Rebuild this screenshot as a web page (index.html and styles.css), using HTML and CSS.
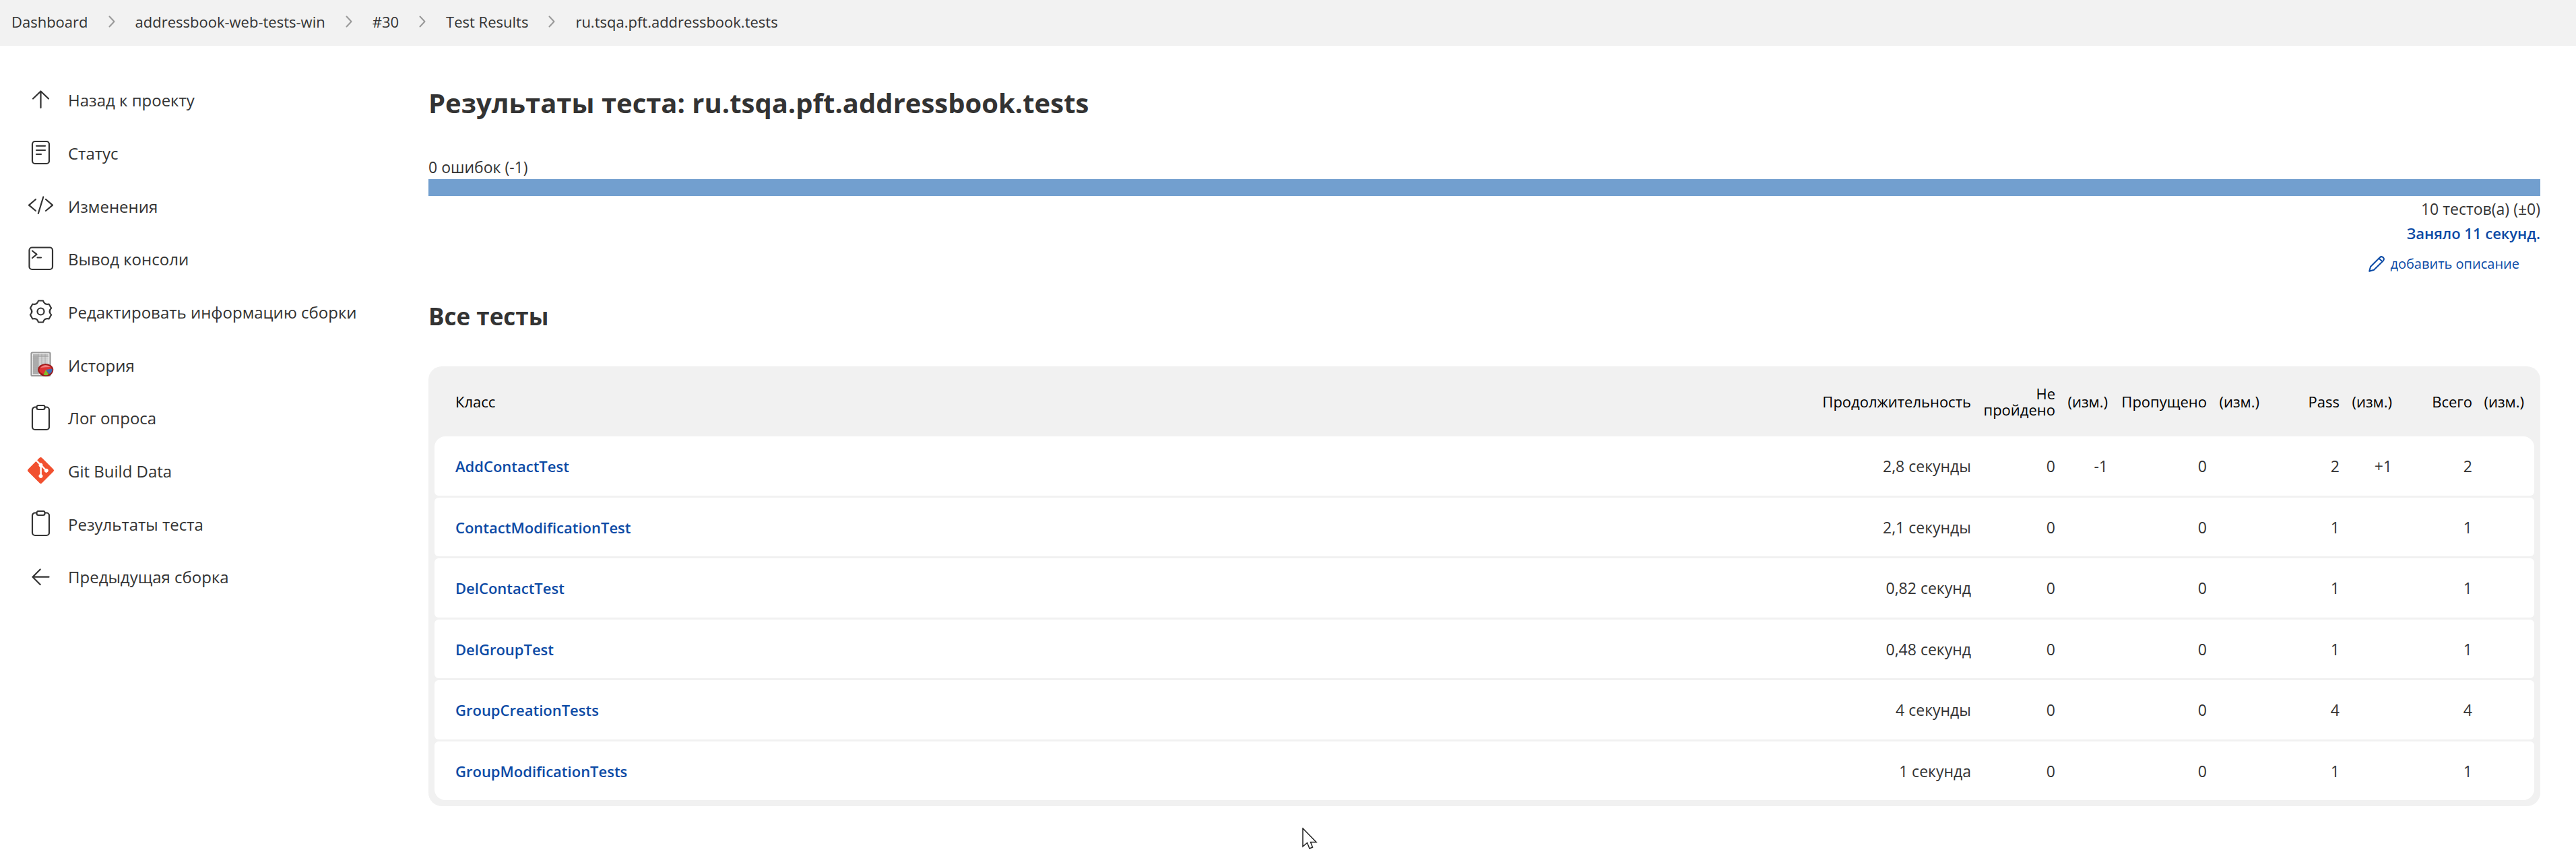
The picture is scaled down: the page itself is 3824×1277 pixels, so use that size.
FILE: index.html
```html
<!DOCTYPE html>
<html lang="ru">
<head>
<meta charset="utf-8">
<meta name="viewport" content="width=device-width, initial-scale=1">
<title>Результаты теста: ru.tsqa.pft.addressbook.tests</title>
<link rel="stylesheet" href="styles.css">
</head>
<body>
<svg class="defs" aria-hidden="true">
  <symbol id="chevron" viewBox="0 0 10 18"><path d="M1.500 1.500L8.500 9L1.500 16.500"/></symbol>
  <symbol id="clipboard" viewBox="0 0 40 40"><path d="M14 3.500H12a4 4 0 0 0-4 4V33a4 4 0 0 0 4 4H29a4 4 0 0 0 4-4V7.500a4 4 0 0 0-4-4H27"/><rect x="14.500" y="1" width="12" height="6" rx="2.500"/></symbol>
</svg>

<nav class="breadcrumbs" aria-label="Breadcrumbs">
  <a href="#">Dashboard</a>
  <svg class="chevron"><use href="#chevron"/></svg>
  <a href="#">addressbook-web-tests-win</a>
  <svg class="chevron"><use href="#chevron"/></svg>
  <a href="#">#30</a>
  <svg class="chevron"><use href="#chevron"/></svg>
  <a href="#">Test Results</a>
  <svg class="chevron"><use href="#chevron"/></svg>
  <a href="#">ru.tsqa.pft.addressbook.tests</a>
</nav>

<div class="page">
  <aside class="sidebar">
    <ul class="tasks">
      <li><a class="task" href="#"><svg class="icon" viewBox="0 0 40 40"><path d="M20.500 31V7M9 17.500L20.500 6.500L32 17.500"/></svg>Назад к проекту</a></li>
      <li><a class="task" href="#"><svg class="icon" viewBox="0 0 40 40"><rect x="8" y="2" width="25" height="33" rx="4"/><path d="M14 8.700H27M14 15H27M14 21H21"/></svg>Статус</a></li>
      <li><a class="task" href="#"><svg class="icon" viewBox="0 0 40 40"><path d="M13 10L3 18.700L13 27M28 10L38 18.700L28 27M24.300 6.500L16.800 31"/></svg>Изменения</a></li>
      <li><a class="task" href="#"><svg class="icon" viewBox="0 0 40 40"><rect x="3.500" y="2.500" width="34.500" height="32.500" rx="4"/><path d="M8 7.500L14.500 12.700L8 18M15.500 17.500H21"/></svg>Вывод консоли</a></li>
      <li><a class="task" href="#"><svg class="icon" viewBox="0 0 40 40"><g transform="translate(20.500 18.500)"><circle r="5"/><path d="M-3.500-16H3.500Q5.400-9.400 12.100-11L15.600-5Q10.800 0 15.600 5L12.100 11Q5.400 9.400 3.500 16H-3.500Q-5.400 9.400-12.100 11L-15.600 5Q-10.800 0-15.600-5L-12.100-11Q-5.400-9.400-3.500-16Z"/></g></svg>Редактировать информацию сборки</a></li>
      <li><a class="task" href="#"><svg class="icon icon-filled" viewBox="0 0 40 40">
        <rect x="6.500" y="1.500" width="28" height="34.500" rx="1.500" fill="#f4f4f4" stroke="#999"/>
        <rect x="9" y="4" width="23" height="30" fill="#e6e6e6"/>
        <path d="M9 4H32V8H9Z" fill="#bdbdbd"/><path d="M9 4H17V34H9Z" fill="#b2b2b2"/>
        <path d="M9 8H32M9 11H32M9 14H32M9 17H32M9 20H32M9 23H32M9 26H32M9 29H32M9 32H32M17 4V34M22 4V34M27 4V34" fill="none" stroke="#9a9a9a" stroke-width="0.700"/>
        <ellipse cx="28" cy="29" rx="10.500" ry="8" fill="#7d1c1c"/>
        <ellipse cx="27.700" cy="27" rx="10.500" ry="8" fill="#dd3434" stroke="#a01c1c"/>
        <path d="M20 24Q27 17 35 23Q28 23 20 24Z" fill="#f08080"/>
        <path d="M28 27L37.500 25.500Q38.500 31 33 33.500Z" fill="#3f6fb5"/>
        <path d="M28 27L32 34.500Q28 36 24.500 34.500Z" fill="#7cc32c"/>
      </svg>История</a></li>
      <li><a class="task" href="#"><svg class="icon"><use href="#clipboard"/></svg>Лог опроса</a></li>
      <li><a class="task" href="#"><svg class="icon icon-filled" viewBox="0 0 40 40"><path transform="translate(1 -1) scale(.424)" fill="#f1502f" d="M90.156 41.965 50.036 1.848a5.918 5.918 0 0 0-8.372 0l-8.328 8.332 10.566 10.566a7.030 7.030 0 0 1 7.230 1.684 7.034 7.034 0 0 1 1.669 7.277l10.187 10.184a7.028 7.028 0 0 1 7.278 1.672 7.040 7.040 0 0 1 0 9.957 7.050 7.050 0 0 1-9.965 0 7.044 7.044 0 0 1-1.528-7.660l-9.500-9.497V59.360a7.040 7.040 0 0 1 1.860 11.290 7.040 7.040 0 0 1-9.957 0 7.040 7.040 0 0 1 0-9.958 7.060 7.060 0 0 1 2.304-1.539V33.926a7.049 7.049 0 0 1-3.820-9.234L29.242 14.272 1.730 41.777a5.918 5.918 0 0 0 0 8.371L41.852 90.270a5.925 5.925 0 0 0 8.370 0l39.934-39.934a5.925 5.925 0 0 0 0-8.371"/></svg>Git Build Data</a></li>
      <li><a class="task" href="#"><svg class="icon"><use href="#clipboard"/></svg>Результаты теста</a></li>
      <li><a class="task" href="#"><svg class="icon" viewBox="0 0 40 40"><path d="M32.500 19.700H8.500M19.700 8.500L8.500 19.700L19.700 31"/></svg>Предыдущая сборка</a></li>
    </ul>
  </aside>

  <main class="content">
    <h1>Результаты теста: ru.tsqa.pft.addressbook.tests</h1>

    <section class="summary">
      <div class="failures">0 ошибок (-1)</div>
      <div class="result-bar"></div>
      <div class="total">10 тестов(а) (±0)</div>
      <a class="duration" href="#">Заняло 11 секунд.</a>
      <a class="describe" href="#"><svg class="pencil" viewBox="0 0 24 24"><path d="M1.200 22.800L3 16L16.800 2.200Q19.300 0 21.700 2.300Q24 4.700 21.800 7.200L8 20.800ZM15.500 3.500L20.500 8.500"/></svg>добавить описание</a>
    </section>

    <h2>Все тесты</h2>

    <table class="results">
      <colgroup>
        <col><col class="col-duration"><col class="col-failed"><col class="col-diff"><col class="col-skipped"><col class="col-diff"><col class="col-count"><col class="col-diff"><col class="col-count"><col class="col-last">
      </colgroup>
      <thead>
        <tr><th>Класс</th><th>Продолжительность</th><th>Не пройдено</th><th>(изм.)</th><th>Пропущено</th><th>(изм.)</th><th>Pass</th><th>(изм.)</th><th>Всего</th><th>(изм.)</th></tr>
      </thead>
      <tbody>
        <tr><td><a href="#">AddContactTest</a></td><td>2,8 секунды</td><td>0</td><td>-1</td><td>0</td><td></td><td>2</td><td>+1</td><td>2</td><td></td></tr>
        <tr><td><a href="#">ContactModificationTest</a></td><td>2,1 секунды</td><td>0</td><td></td><td>0</td><td></td><td>1</td><td></td><td>1</td><td></td></tr>
        <tr><td><a href="#">DelContactTest</a></td><td>0,82 секунд</td><td>0</td><td></td><td>0</td><td></td><td>1</td><td></td><td>1</td><td></td></tr>
        <tr><td><a href="#">DelGroupTest</a></td><td>0,48 секунд</td><td>0</td><td></td><td>0</td><td></td><td>1</td><td></td><td>1</td><td></td></tr>
        <tr><td><a href="#">GroupCreationTests</a></td><td>4 секунды</td><td>0</td><td></td><td>0</td><td></td><td>4</td><td></td><td>4</td><td></td></tr>
        <tr><td><a href="#">GroupModificationTests</a></td><td>1 секунда</td><td>0</td><td></td><td>0</td><td></td><td>1</td><td></td><td>1</td><td></td></tr>
      </tbody>
    </table>
  </main>
</div>

<svg class="pointer" viewBox="0 0 24 34" aria-hidden="true"><path d="M1 1V28L7.500 22.500L11 31L15.500 29L12.500 21.500H21Z"/></svg>
</body>
</html>
```

FILE: styles.css
```css
* {
  box-sizing: border-box;
}

body {
  margin: 0;
  min-height: 100vh;
  position: relative;
  background: #fff;
  color: #333;
  font-family: "Open Sans", "Noto Sans", sans-serif;
  font-size: 23px;
  font-weight: 500;
}

a {
  color: #0b4aa5;
  text-decoration: none;
}

.defs {
  display: none;
}

/* Breadcrumb bar */
.breadcrumbs {
  display: flex;
  align-items: center;
  gap: 30px;
  height: 68px;
  padding: 0 17px 5px;
  background: #f2f2f2;
  font-size: 22px;
}

.breadcrumbs a {
  color: #333;
}

.chevron {
  width: 10px;
  height: 18px;
  fill: none;
  stroke: #999;
  stroke-width: 2;
  stroke-linecap: round;
  stroke-linejoin: round;
}

.page {
  display: flex;
  align-items: flex-start;
}

/* Side panel */
.sidebar {
  flex: 0 0 636px;
  padding: 41px 0 0 40px;
}

.tasks {
  margin: 0;
  padding: 0;
  list-style: none;
}

.task {
  display: flex;
  align-items: center;
  gap: 21px;
  height: 79px;
  color: #333;
  font-size: 24px;
}

.tasks li:nth-child(3n) .task {
  height: 78px;
}

.icon {
  width: 40px;
  height: 40px;
  overflow: visible;
  fill: none;
  stroke: #333;
  stroke-width: 2.2;
  stroke-linecap: round;
  stroke-linejoin: round;
}

.icon-filled {
  stroke: none;
}

/* Main column */
.content {
  flex: 1;
  min-width: 0;
  padding: 61px 53px 80px 0;
}

h1 {
  margin: 0 0 55px;
  font-size: 40px;
  line-height: 48px;
  font-weight: 700;
}

h2 {
  margin: 36px 0 52px;
  font-size: 35px;
  line-height: 44px;
  font-weight: 700;
}

.summary {
  display: flex;
  flex-direction: column;
  align-items: flex-end;
  line-height: 36px;
}

.failures {
  align-self: stretch;
  line-height: 32px;
  font-weight: 400;
}

.result-bar {
  align-self: stretch;
  height: 25px;
  margin: 2px 0 1px;
  background: #729fcf;
}

.total {
  font-weight: 400;
}

.duration {
  font-size: 22px;
  font-weight: 600;
}

.describe {
  display: flex;
  align-items: center;
  gap: 8px;
  height: 40px;
  margin-top: 8px;
  padding-right: 31px;
  font-size: 20px;
}

.pencil {
  width: 24px;
  height: 24px;
  fill: none;
  stroke: #0b4aa5;
  stroke-width: 2;
  stroke-linejoin: round;
}

/* Results table */
.results {
  width: 100%;
  table-layout: fixed;
  border-collapse: separate;
  border-spacing: 0 3px;
  padding: 0 9px 6px;
  border-radius: 20px;
  background: #f1f1f1;
  text-align: right;
}

.col-duration {
  width: 241px;
}

.col-failed {
  width: 125px;
}

.col-diff {
  width: 78px;
}

.col-skipped {
  width: 147px;
}

.col-count {
  width: 119px;
}

.col-last {
  width: 85px;
}

.results th {
  height: 98px;
  padding: 0 7px 0 4px;
  color: #000;
  font-size: 22px;
  line-height: 24px;
  font-weight: 500;
}

.results td {
  height: 88px;
  padding: 0 7px;
  background: #fff;
}

.results td a {
  font-size: 22px;
  font-weight: 600;
}

.results tr:nth-child(even) td {
  height: 87px;
}

.results th:first-child,
.results td:first-child {
  padding-left: 31px;
  text-align: left;
}

.results th:last-child {
  padding-right: 15px;
}

.results td:first-child {
  border-radius: 6px 0 0 6px;
}

.results td:last-child {
  border-radius: 0 6px 6px 0;
}

.results tbody tr:first-child td:first-child {
  border-top-left-radius: 16px;
}

.results tbody tr:first-child td:last-child {
  border-top-right-radius: 16px;
}

.results tbody tr:last-child td:first-child {
  border-bottom-left-radius: 16px;
}

.results tbody tr:last-child td:last-child {
  border-bottom-right-radius: 16px;
}

/* Mouse pointer over the page */
.pointer {
  position: absolute;
  left: 1933px;
  top: 1229px;
  width: 24px;
  height: 34px;
  fill: #fff;
  stroke: #222;
  stroke-width: 1.5;
}
```
